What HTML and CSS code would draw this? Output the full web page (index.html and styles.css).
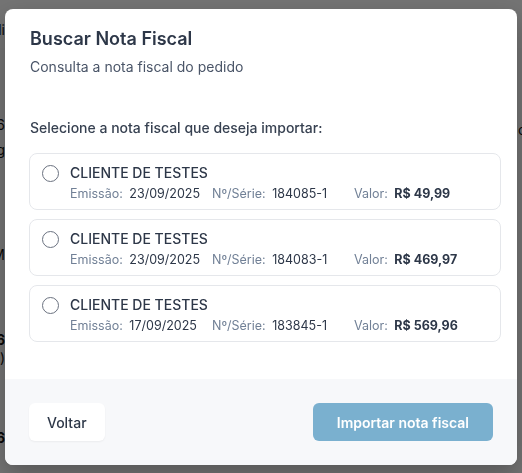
FILE: index.html
```html
<!DOCTYPE html>
<html lang="pt-BR">
  <head>
    <meta charset="UTF-8" />
    <meta name="viewport" content="width=device-width, initial-scale=1.0" />
    <title>Buscar Nota Fiscal</title>
    <link rel="stylesheet" href="styles.css">
  </head>
  <body>
    <div class="page">
      <div class="page-left">
        <p class="l1">Cli</p>
        <p class="l2">6</p>
        <p class="l3">g</p>
        <p class="l4">M</p>
        <p class="l5 strong">6</p>
        <p class="l6">(s</p>
        <p class="l7 strong">6</p>
      </div>
      <div class="page-right">
        <p class="r1">o</p>
      </div>
    </div>

    <div class="overlay">
      <div class="modal">
        <div class="modal-header">
          <h2>Buscar Nota Fiscal</h2>
          <p class="subtitle">Consulta a nota fiscal do pedido</p>
        </div>

        <div class="modal-body">
          <p class="select-label">Selecione a nota fiscal que deseja importar:</p>

          <div class="invoice-list">
            <label class="invoice">
              <input type="radio" name="nota" />
              <div class="invoice-info">
                <div class="client">CLIENTE DE TESTES</div>
                <div class="details">
                  <span><em>Emissão:</em> 23/09/2025</span>
                  <span><em>Nº/Série:</em> 184085-1</span>
                  <span><em>Valor:</em> <strong>R$ 49,99</strong></span>
                </div>
              </div>
            </label>
            <label class="invoice">
              <input type="radio" name="nota" />
              <div class="invoice-info">
                <div class="client">CLIENTE DE TESTES</div>
                <div class="details">
                  <span><em>Emissão:</em> 23/09/2025</span>
                  <span><em>Nº/Série:</em> 184083-1</span>
                  <span><em>Valor:</em> <strong>R$ 469,97</strong></span>
                </div>
              </div>
            </label>
            <label class="invoice">
              <input type="radio" name="nota" />
              <div class="invoice-info">
                <div class="client">CLIENTE DE TESTES</div>
                <div class="details">
                  <span><em>Emissão:</em> 17/09/2025</span>
                  <span><em>Nº/Série:</em> 183845-1</span>
                  <span><em>Valor:</em> <strong>R$ 569,96</strong></span>
                </div>
              </div>
            </label>
          </div>
        </div>

        <div class="modal-footer">
          <button class="btn-back">Voltar</button>
          <button class="btn-import" disabled>Importar nota fiscal</button>
        </div>
      </div>
    </div>
  </body>
</html>
```

FILE: styles.css
```css
html,
body {
  margin: 0;
  padding: 0;
  height: 100%;
}
body {
  font-family: Inter, "Noto Sans", sans-serif;
  background-color: #ffffff;
  color: #1f2937;
  overflow: hidden;
}

/* page behind the modal */
.page {
  display: flex;
  justify-content: space-between;
  height: 100%;
  font-size: 14px;
  color: #111;
}
.page p {
  margin: 0;
  line-height: 18px;
}
.page-left {
  width: 5px;
  overflow: hidden;
  direction: rtl;
  white-space: nowrap;
}
.page-left .l1 { margin-top: 21px; }
.page-left .l2 { margin-top: 77px; }
.page-left .l3 { margin-top: 7px; }
.page-left .l4 { margin-top: 87px; }
.page-left .l5 { margin-top: 67px; }
.page-left .l6 { margin-top: 0; }
.page-left .l7 { margin-top: 62px; }
.page .strong {
  font-weight: 700;
}
.page-right {
  width: 4px;
  overflow: hidden;
  white-space: nowrap;
}
.page-right .r1 { margin-top: 121px; }

.overlay {
  position: fixed;
  inset: 0;
  background: rgba(0, 0, 0, 0.55);
  padding: 9px 5px 8px 5px;
}
.modal {
  background: #ffffff;
  border-radius: 8px;
  overflow: hidden;
  box-shadow: 0 10px 25px rgba(0, 0, 0, 0.25);
  display: flex;
  flex-direction: column;
  height: 456px;
}

.modal-header {
  padding: 16px 24px 0 25px;
}
.modal-header h2 {
  margin: 0;
  font-size: 18px;
  line-height: 28px;
  font-weight: 600;
  color: #2d3748;
}
.subtitle {
  margin: 4px 0 0;
  font-size: 14px;
  line-height: 20px;
  color: #4a5568;
}

.modal-body {
  padding: 41px 16px 0 24px;
  flex: 1;
}
.select-label {
  margin: 0 0 15px 1px;
  font-size: 14px;
  line-height: 20px;
  font-weight: 500;
  color: #374151;
}
.invoice-list {
  display: flex;
  flex-direction: column;
  gap: 9px;
}
.invoice {
  display: flex;
  align-items: flex-start;
  gap: 11px;
  border: 1px solid #e5e7eb;
  border-radius: 8px;
  padding: 9px 12px 0 12px;
  box-sizing: border-box;
  height: 57px;
  cursor: pointer;
}
.invoice input[type="radio"] {
  appearance: none;
  -webkit-appearance: none;
  margin: 2px 0 0 0;
  width: 17px;
  height: 17px;
  border: 1.5px solid #6b7280;
  border-radius: 50%;
  background: #fff;
  flex-shrink: 0;
}
.client {
  font-size: 14px;
  line-height: 20px;
  font-weight: 500;
  color: #2d3748;
}
.details {
  display: grid;
  grid-template-columns: 142px 142px auto;
  margin-top: 1px;
  font-size: 12.5px;
  line-height: 20px;
  color: #2d3748;
}
.details em {
  font-style: normal;
  color: #718096;
  margin-right: 3px;
}
.details strong {
  font-weight: 700;
  color: #2d3748;
}

.modal-footer {
  display: flex;
  justify-content: space-between;
  align-items: center;
  background: #f7f8fa;
  padding: 24px;
  height: 86px;
  box-sizing: border-box;
}
.modal-footer button {
  font-family: Inter, "Noto Sans", sans-serif;
  font-size: 14px;
  font-weight: 500;
  height: 38px;
  border: none;
  border-radius: 6px;
  white-space: nowrap;
}
.btn-back {
  background: #ffffff;
  color: #2d3748;
  padding: 0 18px;
  min-width: 74px;
  box-shadow: 0 1px 2px rgba(0, 0, 0, 0.05);
}
.btn-import {
  background: #7ab0cf;
  color: #ffffff;
  font-weight: 600 !important;
  padding: 0 24px;
  min-width: 180px;
}
```
